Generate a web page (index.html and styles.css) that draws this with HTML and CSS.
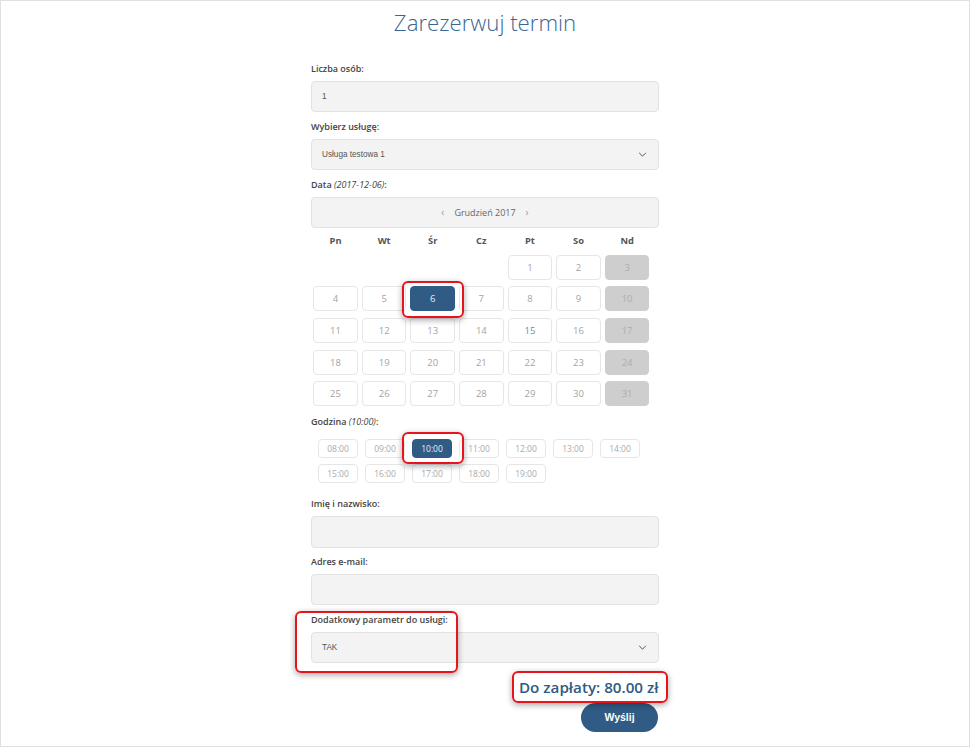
FILE: index.html
```html
<!DOCTYPE html>
<html lang="pl">
<head>
<meta charset="utf-8">
<title>Zarezerwuj termin</title>
<link rel="stylesheet" href="styles.css">
</head>
<body>
<div class="page">
  <h1 class="title">Zarezerwuj termin</h1>
  <form class="form">
    <div class="field">
      <div class="label">Liczba osób:</div>
      <div class="input">1</div>
    </div>
    <div class="field">
      <div class="label">Wybierz usługę:</div>
      <div class="input select">Usługa testowa 1
        <svg class="chev" viewBox="0 0 10 6" width="10" height="6"><path d="M1 1 L5 5 L9 1" fill="none" stroke="#555" stroke-width="1.2"/></svg>
      </div>
    </div>
    <div class="field">
      <div class="label">Data <i>(2017-12-06)</i>:</div>
      <div class="cal-head"><span class="arrow">‹</span><span>Grudzień 2017</span><span class="arrow">›</span></div>
      <div class="days">
        <span>Pn</span><span>Wt</span><span>Śr</span><span>Cz</span><span>Pt</span><span>So</span><span>Nd</span>
      </div>
      <div class="grid">
        <span class="empty"></span><span class="empty"></span><span class="empty"></span><span class="empty"></span>
        <span class="day">1</span><span class="day">2</span><span class="day off">3</span>
        <span class="day">4</span><span class="day">5</span><span class="day sel">6</span><span class="day">7</span><span class="day">8</span><span class="day">9</span><span class="day off">10</span>
        <span class="day">11</span><span class="day">12</span><span class="day">13</span><span class="day">14</span><span class="day today">15</span><span class="day">16</span><span class="day off">17</span>
        <span class="day">18</span><span class="day">19</span><span class="day">20</span><span class="day">21</span><span class="day">22</span><span class="day">23</span><span class="day off">24</span>
        <span class="day">25</span><span class="day">26</span><span class="day">27</span><span class="day">28</span><span class="day">29</span><span class="day">30</span><span class="day off">31</span>
      </div>
    </div>
    <div class="field hours-field">
      <div class="label">Godzina <i>(10:00)</i>:</div>
      <div class="hours">
        <span class="slot">08:00</span><span class="slot">09:00</span><span class="slot sel">10:00</span><span class="slot">11:00</span><span class="slot">12:00</span><span class="slot">13:00</span><span class="slot">14:00</span>
        <span class="slot">15:00</span><span class="slot">16:00</span><span class="slot">17:00</span><span class="slot">18:00</span><span class="slot">19:00</span>
      </div>
    </div>
    <div class="field name-field">
      <div class="label">Imię i nazwisko:</div>
      <div class="input"></div>
    </div>
    <div class="field">
      <div class="label">Adres e-mail:</div>
      <div class="input"></div>
    </div>
    <div class="field">
      <div class="label">Dodatkowy parametr do usługi:</div>
      <div class="input select">TAK
        <svg class="chev" viewBox="0 0 10 6" width="10" height="6"><path d="M1 1 L5 5 L9 1" fill="none" stroke="#555" stroke-width="1.2"/></svg>
      </div>
    </div>
    <div class="total">Do zapłaty: 80.00 zł</div>
    <div class="actions"><button type="button" class="btn">Wyślij</button></div>
  </form>
  <div class="mark mark-day"></div>
  <div class="mark mark-hour"></div>
  <div class="mark mark-param"></div>
  <div class="mark mark-total"></div>
</div>
</body>
</html>
```
FILE: styles.css
```css
html, body {
  margin: 0;
  padding: 0;
  background: #fff;
}
body {
  font-family: "Open Sans", "Liberation Sans", sans-serif;
  color: #444;
}
.page {
  position: relative;
  width: 970px;
  height: 747px;
  box-sizing: border-box;
  border: 1px solid #e0e0e0;
  overflow: hidden;
}
.title {
  margin: 0;
  height: 44px;
  line-height: 44px;
  text-align: center;
  font-size: 22.2px;
  font-weight: 300;
  color: #3a6790;
}
.form {
  width: 348px;
  margin: 0 auto;
  padding-top: 16px;
}
.field {
  margin-bottom: 6.5px;
}
.label {
  height: 16px;
  line-height: 16px;
  font-size: 9px;
  font-weight: 600;
  color: #444;
  margin-bottom: 4px;
}
.label i {
  font-weight: 400;
}
.input {
  position: relative;
  height: 31.3px;
  box-sizing: border-box;
  border: 1px solid #e2e2e2;
  border-radius: 4px;
  background: #f3f3f3;
  padding: 0 10px;
  line-height: 29px;
  font-family: "Liberation Sans", Arial, sans-serif;
  font-size: 8.2px;
  color: #555;
}
.select {
  display: flex;
  align-items: center;
  justify-content: space-between;
}
.chev {
  width: 9px;
  height: 5px;
  margin-right: 1px;
}
.cal-head {
  height: 31.3px;
  box-sizing: border-box;
  border: 1px solid #e2e2e2;
  border-radius: 4px;
  background: #f3f3f3;
  display: flex;
  align-items: center;
  justify-content: center;
  gap: 10px;
  font-size: 9px;
  color: #666;
}
.cal-head .arrow {
  color: #999;
  font-size: 10px;
}
.days, .grid {
  display: grid;
  grid-template-columns: repeat(7, 44.5px);
  column-gap: 4.1px;
  margin-left: 2.3px;
}
.days {
  margin-top: 5px;
  height: 16px;
  line-height: 16px;
  text-align: center;
  font-size: 9.3px;
  font-weight: 700;
  color: #555;
}
.grid {
  margin-top: 6px;
  row-gap: 6.6px;
  grid-auto-rows: 25px;
}
.day {
  box-sizing: border-box;
  border: 1px solid #e6e6e6;
  border-radius: 4px;
  background: #fff;
  display: flex;
  align-items: center;
  justify-content: center;
  font-size: 9.5px;
  color: #a3a3a3;
}
.day.off {
  background: #cecece;
  border-color: #cecece;
  color: #adadad;
}
.day.today {
  color: #6a8db0;
}
.day.sel {
  background: #2f5b84;
  border-color: #2f5b84;
  color: #e8eef4;
}
.hours-field {
  margin-top: 8px;
}
.hours {
  padding: 4.5px 0 0 7px;
  display: flex;
  flex-wrap: wrap;
  column-gap: 7px;
  row-gap: 6px;
  width: 335px;
}
.slot {
  width: 40px;
  height: 19px;
  box-sizing: border-box;
  border: 1px solid #e6e6e6;
  border-radius: 4px;
  display: flex;
  align-items: center;
  justify-content: center;
  font-size: 8.5px;
  color: #aaa;
}
.slot.sel {
  background: #2f5b84;
  border-color: #2f5b84;
  color: #e8eef4;
}
.name-field {
  margin-top: 13.5px;
}
.total {
  margin-top: 14px;
  height: 20px;
  line-height: 20px;
  text-align: right;
  font-size: 15.2px;
  font-weight: 600;
  color: #2f5b84;
  padding-right: 0.5px;
}
.actions {
  margin-top: 5.5px;
  display: flex;
  justify-content: flex-end;
}
.btn {
  width: 77px;
  height: 29.5px;
  margin-right: 1px;
  border: none;
  border-radius: 15px;
  background: #2f5b84;
  color: #fff;
  font-family: "Liberation Sans", Arial, sans-serif;
  font-size: 10.5px;
  font-weight: 700;
  padding: 0;
}
.mark {
  position: absolute;
  box-sizing: border-box;
  border: 2px solid #e8141c;
  border-radius: 6px;
  box-shadow: 0 2px 6px rgba(0, 0, 0, 0.35);
}
.mark-day {
  left: 400.7px;
  top: 280px;
  width: 62.3px;
  height: 36.7px;
}
.mark-hour {
  left: 400.7px;
  top: 430.7px;
  width: 62.6px;
  height: 32.6px;
}
.mark-param {
  left: 294px;
  top: 609.7px;
  width: 162.7px;
  height: 62px;
}
.mark-total {
  left: 511.3px;
  top: 669.7px;
  width: 156px;
  height: 32px;
}
```
